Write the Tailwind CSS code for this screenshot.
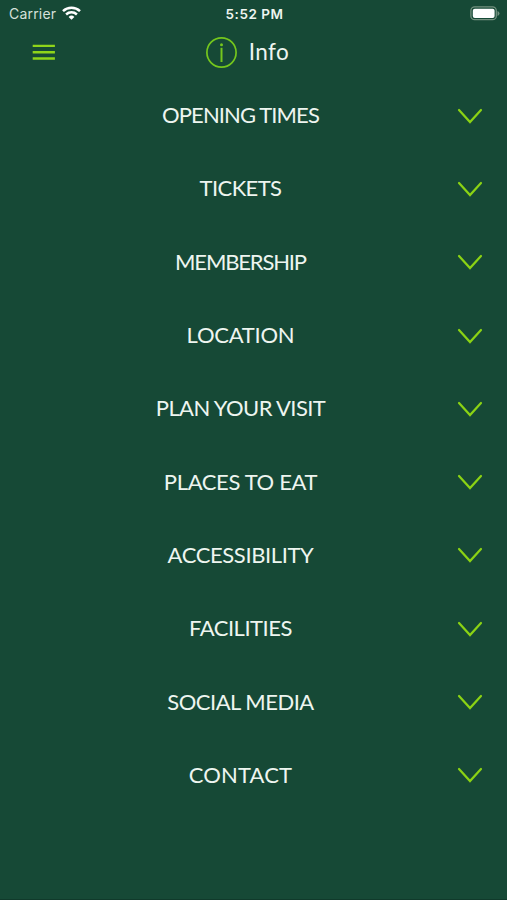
<!DOCTYPE html>
<html lang="en">
<head>
<meta charset="utf-8">
<title>Info</title>
<script src="https://cdn.jsdelivr.net/npm/@tailwindcss/browser@4"></script>
</head>
<body class="bg-[#164936]">
<div class="flex h-[900px] w-[507px] flex-col overflow-hidden border-b border-[#103a2b] bg-[#164936] font-['Lato',sans-serif] text-[#eef5f0]">
  <div class="grid h-[27px] grid-cols-3 items-center pr-[7px] pl-[9px] font-['Inter',sans-serif]">
    <div class="flex items-center gap-[6px] text-[#d5e0da]">
      <span class="text-[14px] tracking-[0.2px]">Carrier</span>
      <svg class="mb-px h-[14px] w-[19px]" viewBox="0 0 19 14" fill="none" stroke="#fff" stroke-width="2.5"><path d="M1 5.1a12.3 12.3 0 0 1 17 0M4.1 8.5a7.9 7.9 0 0 1 10.8 0"/><path d="M9.5 13.8 6.6 10.9a4.2 4.2 0 0 1 5.8 0z" fill="#fff" stroke="none"/></svg>
    </div>
    <div class="pt-px text-center text-[13.5px] font-semibold tracking-[0.5px] whitespace-nowrap">5:52 PM</div>
    <svg class="h-[15px] w-[30px] justify-self-end" viewBox="0 0 30 15"><rect x=".9" y=".9" width="25.4" height="12.8" rx="3.8" fill="none" stroke="#73917f" stroke-width="1.3"/><rect x="2.8" y="2.7" width="21.8" height="9.3" rx="2" fill="#fff"/><path d="M27.5 5v5q2-.8 2-2.5t-2-2.5" fill="#73917f"/></svg>
  </div>
  <header class="grid h-[52px] grid-cols-[1fr_auto_1fr] items-start pt-[9px]">
    <svg class="mt-[8px] ml-8 h-4 w-6" viewBox="0 0 24 16" stroke="#8fd41a" stroke-width="2.4"><path d="M.7 1.9h22.2M.7 8.2h22.2M.7 14.5h22.2"/></svg>
    <div class="flex h-8 -translate-x-[6px] items-center gap-[11px]">
      <svg class="h-8 w-8" viewBox="0 0 32 32" fill="none" stroke="#75c71d" stroke-width="1.7"><circle cx="15.5" cy="16.5" r="14.6"/><path d="M15.5 11.8V26" stroke-width="2"/><circle cx="15.5" cy="8.7" r="1.5" fill="#75c71d" stroke="none"/></svg>
      <h1 class="text-[22.5px] leading-8 tracking-[0.4px]">Info</h1>
    </div>
  </header>
  <ul class="flex flex-col text-[22px]">
    <li class="grid h-[73.3px] grid-cols-[26px_1fr_52px] items-center"><span class="col-start-2 pb-[2px] text-center tracking-[-0.9px]">OPENING TIMES</span><svg class="ml-[2px] h-4 w-[26px]" viewBox="0 0 26 16" fill="none" stroke="#8bd314" stroke-width="2.2" stroke-linecap="round"><path d="M2 2 13 14 24 2"/></svg></li>
    <li class="grid h-[73.3px] grid-cols-[26px_1fr_52px] items-center"><span class="col-start-2 pb-[2px] text-center tracking-[-0.6px]">TICKETS</span><svg class="ml-[2px] h-4 w-[26px]" viewBox="0 0 26 16" fill="none" stroke="#8bd314" stroke-width="2.2" stroke-linecap="round"><path d="M2 2 13 14 24 2"/></svg></li>
    <li class="grid h-[73.3px] grid-cols-[26px_1fr_52px] items-center"><span class="col-start-2 pb-[2px] text-center tracking-[-1.15px]">MEMBERSHIP</span><svg class="ml-[2px] h-4 w-[26px]" viewBox="0 0 26 16" fill="none" stroke="#8bd314" stroke-width="2.2" stroke-linecap="round"><path d="M2 2 13 14 24 2"/></svg></li>
    <li class="grid h-[73.3px] grid-cols-[26px_1fr_52px] items-center"><span class="col-start-2 pb-[2px] text-center tracking-[-0.25px]">LOCATION</span><svg class="ml-[2px] h-4 w-[26px]" viewBox="0 0 26 16" fill="none" stroke="#8bd314" stroke-width="2.2" stroke-linecap="round"><path d="M2 2 13 14 24 2"/></svg></li>
    <li class="grid h-[73.3px] grid-cols-[26px_1fr_52px] items-center"><span class="col-start-2 pb-[2px] text-center tracking-[-0.6px]">PLAN YOUR VISIT</span><svg class="ml-[2px] h-4 w-[26px]" viewBox="0 0 26 16" fill="none" stroke="#8bd314" stroke-width="2.2" stroke-linecap="round"><path d="M2 2 13 14 24 2"/></svg></li>
    <li class="grid h-[73.3px] grid-cols-[26px_1fr_52px] items-center"><span class="col-start-2 pb-[2px] text-center tracking-[-0.35px]">PLACES TO EAT</span><svg class="ml-[2px] h-4 w-[26px]" viewBox="0 0 26 16" fill="none" stroke="#8bd314" stroke-width="2.2" stroke-linecap="round"><path d="M2 2 13 14 24 2"/></svg></li>
    <li class="grid h-[73.3px] grid-cols-[26px_1fr_52px] items-center"><span class="col-start-2 pb-[2px] text-center tracking-[-0.38px]">ACCESSIBILITY</span><svg class="ml-[2px] h-4 w-[26px]" viewBox="0 0 26 16" fill="none" stroke="#8bd314" stroke-width="2.2" stroke-linecap="round"><path d="M2 2 13 14 24 2"/></svg></li>
    <li class="grid h-[73.3px] grid-cols-[26px_1fr_52px] items-center"><span class="col-start-2 pb-[2px] text-center tracking-[-0.5px]">FACILITIES</span><svg class="ml-[2px] h-4 w-[26px]" viewBox="0 0 26 16" fill="none" stroke="#8bd314" stroke-width="2.2" stroke-linecap="round"><path d="M2 2 13 14 24 2"/></svg></li>
    <li class="grid h-[73.3px] grid-cols-[26px_1fr_52px] items-center"><span class="col-start-2 pb-[2px] text-center tracking-[-0.5px]">SOCIAL MEDIA</span><svg class="ml-[2px] h-4 w-[26px]" viewBox="0 0 26 16" fill="none" stroke="#8bd314" stroke-width="2.2" stroke-linecap="round"><path d="M2 2 13 14 24 2"/></svg></li>
    <li class="grid h-[73.3px] grid-cols-[26px_1fr_52px] items-center"><span class="col-start-2 pb-[2px] text-center tracking-[0.15px]">CONTACT</span><svg class="ml-[2px] h-4 w-[26px]" viewBox="0 0 26 16" fill="none" stroke="#8bd314" stroke-width="2.2" stroke-linecap="round"><path d="M2 2 13 14 24 2"/></svg></li>
  </ul>
</div>
</body>
</html>
